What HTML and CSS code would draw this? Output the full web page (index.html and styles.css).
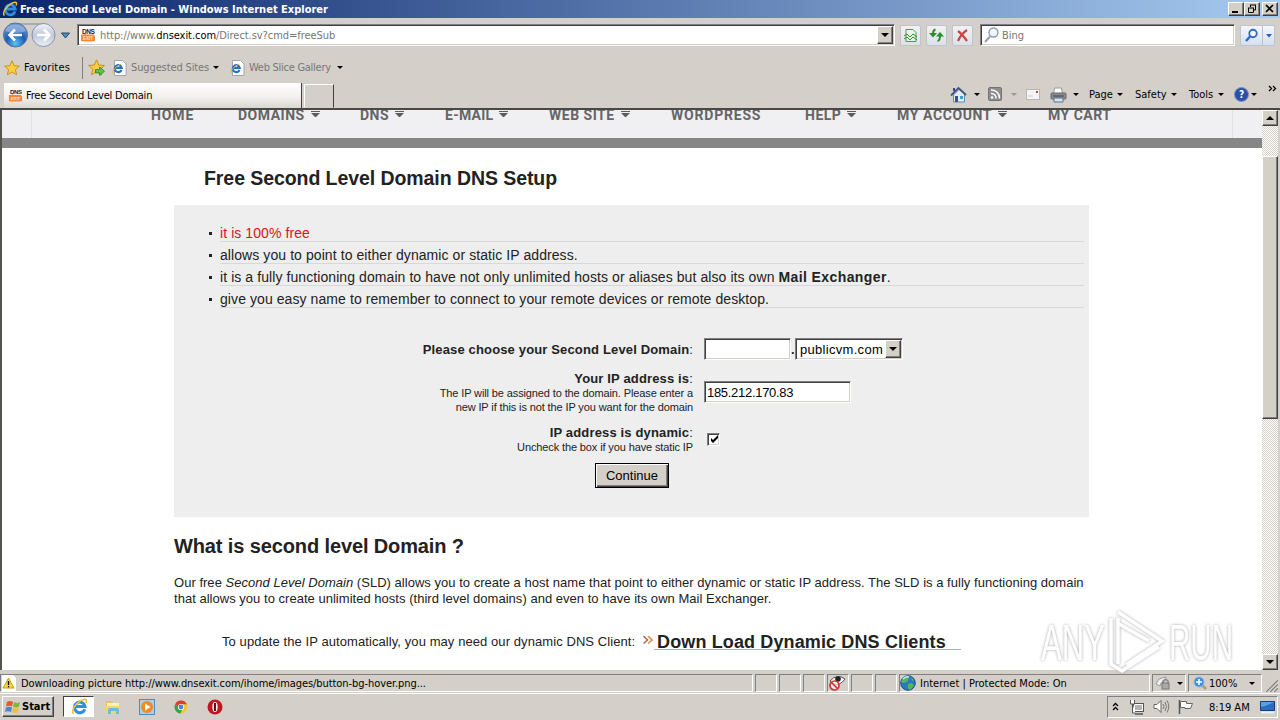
FILE: index.html
```html
<!DOCTYPE html>
<html lang="en">
<head>
<meta charset="utf-8">
<title>Free Second Level Domain</title>
<link rel="stylesheet" href="styles.css">
</head>
<body>
<!-- shared icons -->
<svg width="0" height="0" class="defs">
  <symbol id="ie" viewBox="0 0 16 16"><path d="M13 10.500A5 5 0 1 1 13.200 8H4.500" fill="none" stroke="#2d8fdd" stroke-width="2.800"/><path d="M2.500 14.500C-1 12 6 3 12 1.500c3-.8 3 1 2 3" fill="none" stroke="#f2c02e" stroke-width="1.500"/></symbol>
  <symbol id="dns" viewBox="0 0 16 16"><text x="2" y="6.500" class="dns-t">DNS</text><path d="M1 7.500h3l1-1 1 1h8l1 2v4.500q-7 1-14 0z" fill="#f08a3c"/><text x="3" y="13" class="exit-t">EXIT</text></symbol>
  <symbol id="star" viewBox="0 0 16 16"><path d="M8 .8l2.100 4.900 5.300.4-4 3.500 1.300 5.200L8 12l-4.700 2.800 1.300-5.200-4-3.500 5.300-.4z" fill="#fbcf3c" stroke="#c88a1c" stroke-width=".9"/></symbol>
  <symbol id="pageie" viewBox="0 0 15 16"><path d="M2.500.5h8l3.500 3.500v11.500H2.500z" fill="#fff" stroke="#a0a6b0"/><path d="M9.500 10A3.500 3.500 0 1 1 9.700 8H3.500" fill="none" stroke="#2372c4" stroke-width="2.200"/><path d="M1 13q-1-4 8-9" fill="none" stroke="#e8b52c"/></symbol>
</svg>

<div class="titlebar">
  <svg width="16" height="16"><use href="#ie"/></svg>
  <span class="title">Free Second Level Domain - Windows Internet Explorer</span>
  <span class="btn3d"><svg width="12" height="10"><path d="M2 8h6" stroke="#000" stroke-width="2"/></svg></span>
  <span class="btn3d"><svg width="12" height="10"><path d="M4 1h6M4.500 1v2M9.500 1v5h-2M2 4h6M2.500 4v4.500h5V4" stroke="#000" fill="none"/></svg></span>
  <span class="btn3d close"><svg width="12" height="10"><path d="M2 1l7 7M9 1L2 8" stroke="#000" stroke-width="1.700"/></svg></span>
</div>

<!-- address row -->
<div class="address-row">
  <svg width="77" height="30" viewBox="0 0 77 30">
    <defs>
      <radialGradient id="blue" cx=".5" cy=".85" r=".8"><stop offset="0" stop-color="#57c4f2"/><stop offset=".5" stop-color="#1c5cb4"/><stop offset="1" stop-color="#6f9bd4"/></radialGradient>
      <linearGradient id="pale" x1="0" y1="0" x2="0" y2="1"><stop offset="0" stop-color="#f2f4f8"/><stop offset=".5" stop-color="#c0c9d8"/><stop offset="1" stop-color="#eaf0f8"/></linearGradient>
    </defs>
    <path d="M10 4h36" stroke="#a9acb8" stroke-width="2"/>
    <circle cx="15.500" cy="15" r="12" fill="url(#blue)" stroke="#5a6f98"/>
    <path d="M5 11a11 9 0 0 1 21 0q-10 4-21 0z" fill="#b9cdec" opacity=".5"/>
    <path d="M22 15H10M15 9.500L9.500 15l5.500 5.500" stroke="#fff" stroke-width="2.600" fill="none"/>
    <circle cx="43.500" cy="15" r="11.500" fill="url(#pale)" stroke="#8593ad"/>
    <path d="M37 15h12M44 9.500l5.500 5.500-5.500 5.500" stroke="#fff" stroke-width="2.600" fill="none"/>
    <path d="M61.500 13h8l-4 5z" fill="#4e8fc8" stroke="#23466e"/>
  </svg>
  <div class="url">
    <svg width="16" height="16"><use href="#dns"/></svg>
    <span>http://www.<b>dnsexit.com</b>/Direct.sv?cmd=freeSub</span>
    <span class="btn3d drop"><i class="arrow"></i></span>
  </div>
  <span class="tool"><svg width="19" height="19"><path d="M5 3.500h7l3 3v9H5z" fill="#e9f5e6" stroke="#4a9b4e"/><path d="M3 10l3-2 3 3 3-3 4 3M3 13l3-2 3 3 3-3 4 3" stroke="#2f9138" fill="none"/></svg></span>
  <span class="tool"><svg width="19" height="19"><path d="M8.500 3.500Q6 4 6 8M10.500 15q2.500-.5 2.500-5" stroke="#2d8b30" stroke-width="2" fill="none"/><path d="M2 7h8L6 11.500zM9 10.500h8L13 6z" fill="#2d8b30"/></svg></span>
  <span class="tool"><svg width="19" height="19"><path d="M5 5q4 3 9 10M14 4Q8 8 5 15" stroke="#c84646" stroke-width="2.200" fill="none"/></svg></span>
  <div class="search">
    <svg width="18" height="18"><circle cx="10.500" cy="6.500" r="4.500" fill="#eef5fc" stroke="#8c9bb0" stroke-width="1.400"/><path d="M7 10.500L2 16" stroke="#9a9fa8" stroke-width="2"/></svg>
    <span>Bing</span>
  </div>
  <span class="go"><svg width="21" height="19"><circle cx="12" cy="7.500" r="3.700" fill="#fff" stroke="#2f68c8" stroke-width="1.900"/><path d="M9 10.500L5 15" stroke="#2f68c8" stroke-width="2.400"/></svg><svg class="go-drop" width="12" height="19"><path d="M3 8h6L6 11.500z" fill="#2460b8"/></svg></span>
</div>

<!-- favorites bar -->
<div class="fav-row">
  <svg class="star" width="16" height="16"><use href="#star"/></svg>
  <span class="fav">Favorites</span>
  <svg class="star-add" width="17" height="17" viewBox="0 0 16 16"><use href="#star"/><path d="M7 10h4V7.500l4.500 4-4.500 4V13H7z" fill="#5fc34a" stroke="#268528" stroke-width=".8"/></svg>
  <svg class="page-ie" width="15" height="16"><use href="#pageie"/></svg>
  <span class="link sug">Suggested Sites</span><i class="arrow"></i>
  <svg class="page-ie second" width="15" height="16"><use href="#pageie"/></svg>
  <span class="link web">Web Slice Gallery</span><i class="arrow"></i>
</div>

<!-- tabs and command bar -->
<div class="tab-row">
  <div class="tab">
    <svg width="15" height="15"><use href="#dns"/></svg>
    <span>Free Second Level Domain</span>
  </div>
  <div class="newtab"></div>
  <div class="commands">
    <span class="cmd c-home"><svg width="18" height="18"><path d="M3.500 9v7h11V8L9 3.500z" fill="#e4ecf7" stroke="#7487a8"/><path d="M1 9.500L8.500 2l7.500 7" stroke="#3f568d" stroke-width="1.800" fill="none"/><path d="M3 2h2v3H3z" fill="#3b3f9d"/><path d="M5 10h3v6H5z" fill="#37538f"/><path d="M10 10h3v3h-3z" fill="#38a5d6"/></svg><i class="arrow"></i></span>
    <span class="cmd c-rss"><svg width="15" height="15"><rect x=".5" y=".5" width="13" height="13" rx="1.500" fill="#8e8e8e" stroke="#737373"/><circle cx="4" cy="10.500" r="1.300" fill="#fff"/><path d="M3 6.500a4.500 4.500 0 0 1 5 5M3 3a8 8 0 0 1 8.500 8.500" stroke="#fff" stroke-width="1.500" fill="none"/></svg><i class="arrow dim"></i></span>
    <span class="cmd c-mail"><svg width="15" height="12"><rect x=".5" y=".5" width="13" height="10" fill="#f6f4f5" stroke="#bab4b2"/><path d="M10 2h2v2h-2z" fill="#c84054"/><path d="M2 7h5" stroke="#c9c9d0"/></svg></span>
    <span class="cmd c-print"><svg width="17" height="16"><path d="M4.500 1h7l1 6h-9z" fill="#fff" stroke="#9a9a9a"/><rect x="1" y="6" width="15" height="6" rx="1" fill="#8b8d90" stroke="#65676a"/><path d="M3 9h11" stroke="#404346"/><path d="M4 11h9v4H4z" fill="#cfe3f5" stroke="#5f7590"/></svg><i class="arrow"></i></span>
    <span class="cmd c-page">Page<i class="arrow"></i></span>
    <span class="cmd c-safety">Safety<i class="arrow"></i></span>
    <span class="cmd c-tools">Tools<i class="arrow"></i></span>
    <span class="cmd c-help"><b class="help">?</b><i class="arrow"></i></span>
    <svg class="more" width="9" height="8"><path d="M1 1l2.500 2.500L1 6M5 1l2.500 2.500L5 6" stroke="#000" stroke-width="1.300" fill="none"/></svg>
  </div>
</div>

<div class="viewport">
  <div class="page-body">
    <div class="nav">
      <span class="n1">HOME</span>
      <span class="n2">DOMAINS<i class="tri"></i></span>
      <span class="n3">DNS<i class="tri"></i></span>
      <span class="n4">E-MAIL<i class="tri"></i></span>
      <span class="n5">WEB SITE<i class="tri"></i></span>
      <span class="n6">WORDPRESS</span>
      <span class="n7">HELP<i class="tri"></i></span>
      <span class="n8">MY ACCOUNT<i class="tri"></i></span>
      <span class="n9">MY CART</span>
    </div>
    <div class="content">
      <h1>Free Second Level Domain DNS Setup</h1>
      <div class="panel">
        <ul>
          <li class="red">it is 100% free</li>
          <li>allows you to point to either dynamic or static IP address.</li>
          <li>it is a fully functioning domain to have not only unlimited hosts or aliases but also its own <b>Mail Exchanger</b>.</li>
          <li>give you easy name to remember to connect to your remote devices or remote desktop.</li>
        </ul>
        <div class="form">
          <div class="label"><b>Please choose your Second Level Domain</b>:</div>
          <div class="field"><span class="box name"></span><b class="dot">.</b><span class="box select">publicvm.com<span class="btn3d"><i class="arrow"></i></span></span></div>
          <div class="label"><b>Your IP address is</b>:<small>The IP will be assigned to the domain. Please enter a<br>new IP if this is not the IP you want for the domain</small></div>
          <div class="field"><span class="box ipbox">185.212.170.83</span></div>
          <div class="label"><b>IP address is dynamic</b>:<small>Uncheck the box if you have static IP</small></div>
          <div class="field"><span class="box check"><svg width="9" height="9"><path d="M1 3v3l2 2 5-5V0L3 5z"/></svg></span></div>
        </div>
        <div class="submit">Continue</div>
      </div>
      <h2>What is second level Domain ?</h2>
      <p>Our free <i>Second Level Domain</i> (SLD) allows you to create a host name that point to either dynamic or static IP address. The SLD is a fully functioning domain<br>
      that allows you to create unlimited hosts (third level domains) and even to have its own Mail Exchanger.</p>
      <div class="update">
        <span class="note">To update the IP automatically, you may need our dynamic DNS Client:</span>
        <svg width="12" height="10"><path d="M1.500 0l4 4-4 3.500" stroke="#a86a4c" stroke-width="1.500" fill="none"/><path d="M6 0l4 4-4 3.500" stroke="#e8883f" stroke-width="1.600" fill="none"/></svg><b class="download">Down Load Dynamic DNS Clients</b>
      </div>
    </div>
  </div>
  <div class="scrollbar">
    <span class="btn3d"><i class="arrow up"></i></span>
    <span class="btn3d thumb"></span>
    <span class="btn3d bottom"><i class="arrow"></i></span>
  </div>
</div>
<svg class="watermark" width="204" height="70" viewBox="0 0 204 70">
  <text x="5" y="54" textLength="64" lengthAdjust="spacingAndGlyphs">ANY</text>
  <text x="133" y="54" textLength="64" lengthAdjust="spacingAndGlyphs">RUN</text>
  <path d="M82 12v46M82 6l44 29-36 24M83 18l30 17M75 12v46l11 7 37-24" fill="none" stroke="#fff" stroke-width="3.500"/>
</svg>

<!-- status bar -->
<div class="status">
  <div class="cell msg"><svg width="16" height="16"><path d="M1 0h11l3 3v13H1z" fill="#fff"/><path d="M7.500 3L2 13h11z" fill="#f7dc2c" stroke="#c79a10"/><path d="M7.500 6v4M7.500 11v1.300" stroke="#000" stroke-width="1.400"/></svg><span>Downloading picture http://www.dnsexit.com/ihome/images/button-bg-hover.png...</span></div>
  <div class="cell sm"></div><div class="cell sm"></div><div class="cell sm"></div>
  <div class="cell sm"><svg width="18" height="18"><path d="M2 7q7-8 15-2-5 7-11 5z" fill="#fff" stroke="#555"/><circle cx="10" cy="5" r="2.800" fill="#222"/><circle cx="6.500" cy="11.500" r="4.500" fill="#fff" fill-opacity=".6" stroke="#d33434" stroke-width="1.700"/><path d="M3.500 8.500l6 6" stroke="#d33434" stroke-width="1.700"/></svg></div>
  <div class="cell sm"></div><div class="cell sm"></div>
  <div class="cell zone"><svg width="16" height="16"><circle cx="8" cy="8" r="7.300" fill="#2a78c8" stroke="#1f5190"/><path d="M3 3q4-3 6 0l-2 4-4 1-2-1zM8 9l4-1 2 3-4 4-2-2zM11 2l3 3-2 1z" fill="#57b84b"/><path d="M3 4q3-3 6-2" stroke="#c6ecff" stroke-width="1.500" fill="none"/></svg><span>Internet | Protected Mode: On</span></div>
  <div class="cell lock"><svg width="16" height="16"><path d="M1 9q2-6 6-6l4-1-1 4q-4 0-5 5z" fill="#f1f1f1" stroke="#999"/><path d="M8 8V6q2.500-3 5 0v2" fill="none" stroke="#888" stroke-width="1.500"/><rect x="7" y="8" width="7" height="6" fill="#aaa" stroke="#777"/></svg><i class="arrow"></i></div>
  <div class="cell zoom"><svg width="15" height="15"><path d="M9 9l4 4" stroke="#b49c75" stroke-width="3"/><circle cx="6" cy="6" r="5" fill="#3b8ee0" stroke="#8fb8e2"/><path d="M6 3v6M3 6h6" stroke="#fff" stroke-width="1.600"/></svg><span>100%</span><i class="arrow"></i></div>
  <svg class="grip" width="14" height="14"><path d="M1 14L14 1M5 14l9-9M9 14l5-5" stroke="#fff"/><path d="M2 14L14 2M6 14l8-8M10 14l4-4" stroke="#87837b" stroke-width="1.400"/></svg>
</div>

<!-- taskbar -->
<div class="taskbar">
  <div class="start"><svg width="17" height="16"><path d="M2 3q3-2 6 0L7 7.500q-3-1.500-6 0z" fill="#e45b25"/><path d="M9 3q3 2 6 0l-1 4.500q-3 2-6 0z" fill="#7cb83a"/><path d="M1 8.500q3-1.500 6 0L6 13q-3-1.500-6 0z" fill="#4389d5"/><path d="M8 8.500q3 2 6 0L13 13q-3 2-6 0z" fill="#f5bf30"/></svg>Start</div>
  <div class="task"><svg width="17" height="17"><use href="#ie"/></svg></div>
  <div class="quick">
    <svg width="16" height="16"><path d="M1 2h6l1 2h6v10H1z" fill="#e7c553"/><path d="M2 4h12v5H2z" fill="#fbf2b6"/><path d="M1 7h14v7H1z" fill="#f2d670"/><path d="M3 15v-4q0-2 2-2h7q2 0 2 2v4h-3v-3H6v3z" fill="#6fb9e5"/></svg>
    <svg width="16" height="16"><rect x=".5" y=".5" width="15" height="15" fill="#a9d0f0" stroke="#4c8cc6"/><circle cx="8" cy="8" r="6" fill="#f18b1c"/><path d="M6 4.500v7L11.500 8z" fill="#fff"/></svg>
    <svg width="16" height="16" viewBox="-1 -1 16 16"><circle cx="7" cy="7" r="6.500" fill="#f4c62b"/><path d="M1.400 3.700A6.500 6.500 0 0 1 12.900 4.200H7L4.300 8.500z" fill="#d9402f"/><path d="M1.400 3.700L4.500 8.800 8 9.500 6.500 13.500A6.500 6.500 0 0 1 1.400 3.700z" fill="#37a04b"/><circle cx="7" cy="7" r="3.100" fill="#fff"/><circle cx="7" cy="7" r="2.400" fill="#4a83dd"/></svg>
    <svg width="16" height="16"><circle cx="8" cy="8" r="7.500" fill="#bf1622"/><ellipse cx="8" cy="8" rx="2.700" ry="5" fill="#f5eeee"/><path d="M8 4v8" stroke="#6d0b12" stroke-width="2"/></svg>
  </div>
  <div class="tray">
    <svg class="chev" width="7" height="10"><path d="M1 4l2.500-2.500L6 4M1 8l2.500-2.500L6 8" stroke="#000" stroke-width="1.300" fill="none"/></svg>
    <svg width="16" height="16"><rect x="4.500" y="4.500" width="10" height="8" fill="#b5b5b5" stroke="#555"/><path d="M5.500 5.500h8v6h-8z" fill="none" stroke="#fff"/><path d="M6 15h8" stroke="#555" stroke-width="1.500"/><path d="M1.500 1v4h4V1M3.500 5v9h3" fill="#fff" stroke="#555"/></svg>
    <svg width="17" height="16"><path d="M1 5.500h3l4-4v12l-4-4H1z" fill="#fff" stroke="#666"/><path d="M10 5q2 2.500 0 5M12 3q3 4.500 0 9M14 1.500q3.500 6 0 12" stroke="#777" fill="none"/></svg>
    <svg width="16" height="16"><path d="M1.500 1v14" stroke="#555" stroke-width="1.500"/><path d="M2.500 2.500h6v2h6l-2 5H7v-1H2.500z" fill="#fff" stroke="#666"/></svg>
    <span class="clock">8:19 AM</span>
    <svg width="15" height="13"><path d="M.5.500h14v9H.500z" fill="#2a6cc4" stroke="#173e7c"/><path d="M1 6Q7 5 14 1V1H1z" fill="#5aa0e6"/><path d="M1 11.500h13" stroke="#e8f2fc" stroke-width="2"/></svg>
  </div>
</div>
</body>
</html>
```
FILE: styles.css
```css
*{box-sizing:border-box;margin:0;padding:0;}
body{width:1280px;height:720px;overflow:hidden;background:#d4cfc8;font-family:"DejaVu Sans Condensed","DejaVu Sans",sans-serif;font-stretch:condensed;font-size:11px;color:#000;white-space:nowrap;}
svg{display:block;flex:none;}
.defs{position:absolute;}
.dns-t{font:bold 6.500px "Liberation Sans",sans-serif;letter-spacing:-.4px;fill:#223;}
.exit-t{font:bold 4.500px "Liberation Sans",sans-serif;letter-spacing:0;fill:#ffe3c8;}

.btn3d{display:flex;align-items:center;justify-content:center;flex:none;background:#d4d0c8;border:1px solid;border-color:#fff #404040 #404040 #fff;box-shadow:inset -1px -1px #808080;}
.arrow{flex:none;width:0;height:0;border:3px solid transparent;border-top-color:#000;border-bottom:0;}
.arrow.dim{border-top-color:#9d9892;}
.arrow.up{border:4px solid transparent;border-bottom-color:#000;border-top:0;}

/* window chrome */
.titlebar{display:flex;align-items:center;height:18px;padding:0 2px;background:linear-gradient(90deg,#0a246a,#a6caf0);}
.title{flex:1;margin-left:2px;color:#fff;font-weight:bold;}
.titlebar .btn3d{width:16px;height:14px;}
.titlebar .close{margin-left:2px;}

.address-row{display:flex;height:34px;align-items:center;}
.url,.search,.box{display:flex;align-items:center;background:#fff;border:1px solid;border-color:#808080 #fff #fff #808080;box-shadow:inset 1px 1px #404040,inset -1px -1px #d4d0c8;}
.url{width:818px;height:22px;padding-left:2px;gap:4px;color:#777;letter-spacing:-.05px;}
.url b{font-weight:normal;color:#000;}
.url .drop{width:16px;height:18px;margin:0 1px 0 auto;}
.drop .arrow{border-width:4px 4px 0;}
.tool,.go{display:flex;height:21px;background:linear-gradient(#f1f1f2,#dde1e8);border:1px solid #bdc3cf;border-radius:2px;}
.tool{width:21px;margin-left:5px;}
.search{width:255px;height:22px;margin-left:7px;padding-left:2px;gap:1px;color:#777;}
.go{width:35px;margin-left:5px;background:linear-gradient(#f4f7fc,#d5dfef);}
.go-drop{border-left:1px solid #b4bfd2;}

.fav-row{display:flex;align-items:center;height:31px;}
.star{margin-left:4px;}
.fav{width:59px;height:22px;margin:0 4px;line-height:21px;border-right:1px solid #808080;letter-spacing:.15px;}
.star-add{margin-left:1px;}
.page-ie{margin-left:7px;}
.page-ie.second{margin-left:11px;}
.link{color:#777;margin-left:4px;}
.sug{width:82px;letter-spacing:-.12px;}
.web{width:88px;letter-spacing:-.27px;}

.tab-row{display:flex;height:27px;border-bottom:2px solid #4a4846;}
.tab{display:flex;align-items:center;gap:3px;width:298px;height:25px;margin-left:4px;padding-left:4px;background:linear-gradient(#fff,#f0efed 60%,#dad6d0);border-right:1px solid #404040;letter-spacing:-.21px;}
.newtab{width:30px;height:24px;margin:1px 0 0 2px;border:1px solid;border-color:#fff #404040 transparent #fff;}
.commands{display:flex;align-items:center;margin-left:616px;padding-bottom:2px;}
.cmd{display:flex;align-items:center;justify-content:space-between;}
.c-home{width:30px;}
.c-rss{width:29px;margin-left:8px;}
.c-mail{margin-left:9px;}
.c-print{width:29px;margin-left:9px;}
.c-page{width:34px;margin-left:10px;}
.c-safety{width:42px;margin-left:12px;}
.c-tools{width:35px;margin-left:12px;}
.c-help{width:23px;margin-left:10px;}
.help{width:15px;height:15px;border-radius:50%;background:#2b50a8;border:1px solid #8095c4;color:#fff;font-size:10px;line-height:13px;text-align:center;}
.more{margin:-12px 0 0 11px;}

/* page */
.viewport{display:flex;height:560px;overflow:hidden;border-left:2px solid #55534f;font-family:"Liberation Sans",Arial,sans-serif;font-stretch:normal;color:#222;}
.page-body{width:1260px;background:#fff;overflow:hidden;}
.nav{display:flex;height:38px;background:linear-gradient(90deg,transparent 29px,#e2e2e4 29px 30px,transparent 30px 1230px,#e2e2e4 1230px 1231px,transparent 1231px) #f0f0f2;border-bottom:10px solid #868686;padding-left:149px;font:bold 14px/10px Roboto,sans-serif;letter-spacing:.5px;color:#666;}
.nav>span{display:flex;}
.tri{width:9px;height:7px;margin:1px 0 0 6px;border-top:1px solid #5c5c5c;}
.tri::before{content:"";display:block;margin-top:1px;border:4.500px solid transparent;border-top:4px solid #5c5c5c;border-bottom:0;}
.n1{width:87px;letter-spacing:.9px;}
.n2{width:122px;}
.n3{width:85px;}
.n4{width:104px;letter-spacing:.25px;}
.n5{width:122px;}
.n6{width:134px;letter-spacing:.8px;}
.n7{width:92px;}
.n8{width:151px;letter-spacing:.6px;}
.content{width:915px;margin-left:172px;}
h1,h2{font-size:20px;line-height:24px;letter-spacing:-.12px;}
h1{padding:18px 0 15px 30px;font-size:19.500px;letter-spacing:-.07px;}
.panel{height:312px;padding:15px 5px 0 46px;background:#eee;}
ul{list-style:none;font-size:14px;letter-spacing:.08px;}
li{height:22px;line-height:26px;border-bottom:1px solid #d8d8d8;}
li::before{content:"";float:left;width:3px;height:3px;margin:12px 0 0 -11px;background:#222;}
li b{letter-spacing:.4px;}
.red{color:#dc1420;}
.form{display:grid;grid-template-columns:473px 1fr;grid-template-rows:22px 44px 30px;column-gap:11px;row-gap:10px;align-items:center;font-size:13px;margin-top:30px;}
.label{text-align:right;line-height:15px;letter-spacing:.15px;}
.label small{display:block;font-size:11px;line-height:14px;letter-spacing:-.12px;}
.field{display:flex;align-items:center;}
.box{height:22px;color:#000;}
.name{width:87px;}
.dot{width:4px;}
.select{width:108px;padding-left:4px;letter-spacing:.3px;}
.select .btn3d{width:16px;height:18px;margin:0 1px 0 auto;}
.select .arrow{border-width:4px 4px 0;}
.ipbox{width:147px;padding-left:2px;letter-spacing:-.3px;}
.check{width:13px;height:13px;margin-left:3px;padding-left:2px;}
.submit{width:74px;height:25px;margin:9px 0 0 375px;border:1px solid #000;box-shadow:inset 1px 1px #fff,inset -1px -1px #404040,inset -2px -2px #808080;background:#d4d0c8;color:#000;text-align:center;line-height:24px;font-size:13px;}
h2{margin-top:17px;}
p{height:32px;margin-top:17px;font-size:13px;line-height:16px;letter-spacing:.025px;}
.update{display:flex;align-items:center;height:24px;margin:22px 0 0 48px;font-size:13px;}
.note{width:420px;letter-spacing:.08px;}
.download{width:307px;height:18px;padding-left:3px;border-bottom:1px solid #e2a27c;font-size:18px;line-height:20px;letter-spacing:.13px;}

.scrollbar{display:flex;flex-direction:column;width:16px;background:repeating-conic-gradient(#fff 0 25%,#d4d0c8 0 50%) 0 0/2px 2px;}
.scrollbar .btn3d{height:16px;}
.scrollbar .thumb{height:263px;margin-top:30px;}
.scrollbar .bottom{margin-top:auto;}
.scrollbar .bottom .arrow{border-width:4px 4px 0;}
.watermark{position:absolute;left:1036px;top:606px;filter:drop-shadow(0 0 1.500px #aaa);}
.watermark text{font:50px "Liberation Sans",sans-serif;fill:#fff;}

/* status bar */
.status{display:flex;height:24px;padding:4px 0 1px;border-bottom:1px solid #fff;}
.cell{display:flex;align-items:center;flex:none;margin-right:2px;border:1px solid;border-color:#808080 #fff #fff #808080;}
.msg{width:753px;gap:4px;letter-spacing:-.07px;}
.sm{width:22px;}
.zone{width:251px;gap:4px;}
.lock{width:34px;padding-left:2px;gap:6px;}
.zoom{width:74px;padding-left:4px;gap:1px;}
.zoom .arrow{margin:0 6px 0 auto;}
.grip{align-self:flex-end;}

.taskbar{display:flex;height:26px;padding:2px;align-items:flex-start;}
.start{display:flex;align-items:center;width:52px;height:21px;padding-left:2px;font-weight:bold;border:1px solid;border-color:#fff #404040 #404040 #fff;box-shadow:inset -1px -1px #808080;}
.task{width:31px;height:21px;margin-left:9px;padding:1px 0 0 7px;background:#fdfdfd;border:1px solid;border-color:#404040 #fff #fff #404040;}
.quick{display:flex;gap:18px;margin:3px 0 0 11px;}
.tray{display:flex;align-items:center;gap:8px;width:171px;height:22px;margin-left:auto;padding-left:4px;border:1px solid;border-color:#808080 #fff #fff #808080;}
.chev{margin-right:2px;}
.clock{width:43px;margin-left:7px;}
```
